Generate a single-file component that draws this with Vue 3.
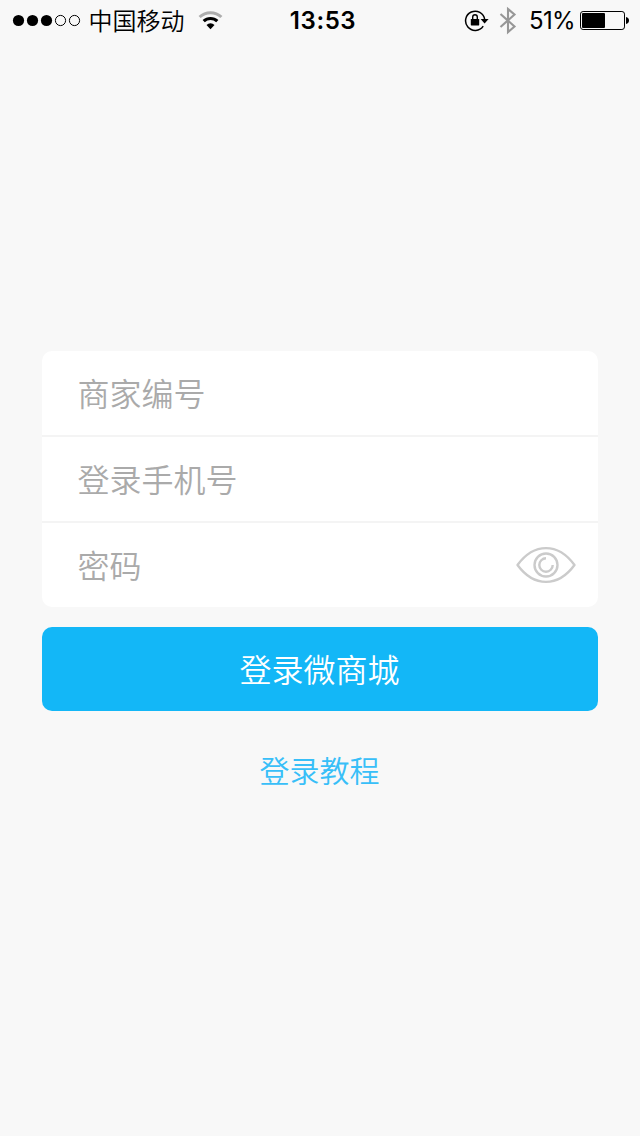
<script setup>
const fields = [
  { id: 'merchant', label: '商家编号' },
  { id: 'phone', label: '登录手机号' },
  { id: 'password', label: '密码', eye: true },
]
const signal = [true, true, true, false, false]
</script>

<template>
  <div class="screen">
    <header class="status">
      <div class="left">
        <svg class="dots" width="70" height="40" viewBox="12 0 70 40">
          <circle
            v-for="(on, i) in signal"
            :key="i"
            :cx="18.5 + i * 14"
            cy="20.5"
            :r="on ? 5.6 : 5.1"
            :fill="on ? '#000' : 'none'"
            :stroke="on ? 'none' : '#000'"
          />
        </svg>
        <span class="carrier">中国移动</span>
        <svg class="wifi" width="26" height="40" viewBox="198 0 26 40" fill="none">
          <path d="M199.600 17a15.800 15.800 0 0 1 21.800 0" stroke="#adadad" stroke-width="3" />
          <path d="M203.700 21.200a9.900 9.900 0 0 1 13.600 0" stroke="#000" stroke-width="3.200" />
          <path d="M206.500 24.900a6 6 0 0 1 8 0L210.500 29.200z" fill="#000" />
        </svg>
      </div>
      <span class="time">13:53</span>
      <div class="right">
        <svg width="26" height="40" viewBox="464 0 26 40" fill="none">
          <path d="M483.200 26.100a9.600 9.600 0 1 1 1.500-6.600" stroke="#000" stroke-width="1.5" />
          <path d="M480.600 19h8l-4 4.600z" fill="#000" />
          <rect x="470.800" y="19" width="8.400" height="6.400" rx=".6" fill="#000" />
          <path d="M472.700 19.500v-2.400a2.300 2.300 0 0 1 4.600 0v2.400" stroke="#000" stroke-width="1.4" />
        </svg>
        <svg class="bluetooth" width="20" height="40" viewBox="498 0 20 40" fill="none">
          <path d="M500.500 14l14 12.500-6.500 5.700V9l6.500 5.500-14 12.500" stroke="#979797" stroke-width="2.1" />
        </svg>
        <span class="percent">51%</span>
        <svg class="battery" width="50" height="40" viewBox="580 0 50 40">
          <rect x="580.500" y="11.500" width="44" height="18" rx="2.600" fill="none" stroke="#000" />
          <rect x="582" y="13" width="23" height="15" rx="1" fill="#000" />
          <path d="M626 17c4 .5 4 6.500 0 7z" fill="#000" />
        </svg>
      </div>
    </header>

    <main class="login">
      <div class="card">
        <div v-for="f in fields" :key="f.id" class="field">
          <span>{{ f.label }}</span>
          <svg v-if="f.eye" width="62" height="40" viewBox="515 545 62 40" fill="none" stroke="#cbcbcb" stroke-width="2.4">
            <path d="M517.500 565C534 542.500 558 542.500 574.500 565C558 587.500 534 587.500 517.500 565z" stroke-linejoin="round" />
            <circle cx="546" cy="565" r="11.500" />
            <path d="M546 558.300a6.700 6.700 0 1 0 6.700 6.700" />
          </svg>
        </div>
      </div>
      <button class="submit" type="button">登录微商城</button>
      <a class="guide">登录教程</a>
    </main>
  </div>
</template>

<style>
body {
  background: #f8f8f8;
}
</style>

<style scoped>
.screen {
  width: 640px;
  height: 1136px;
  overflow: hidden;
  background: #f8f8f8;
  font-family: "Noto Sans CJK SC DemiLight", "Noto Sans CJK SC", sans-serif;
  font-weight: 350;
}
.status {
  display: grid;
  grid-template-columns: 1fr auto 1fr;
  grid-template-rows: 40px;
  align-items: center;
  height: 40px;
  padding: 0 10px 0 12px;
  color: #000;
}
.status svg {
  display: block;
  flex: none;
}
.left,
.right {
  display: flex;
  align-items: center;
  height: 40px;
}
.right {
  justify-content: flex-end;
}
.carrier {
  margin-left: 6.5px;
  font-size: 24px;
  line-height: 40px;
}
.wifi {
  margin-left: 13.5px;
}
.time {
  font: 600 24px/40px Inter, sans-serif;
  letter-spacing: 0.6px;
  padding: 2px 0 0 4px;
}
.bluetooth {
  margin-left: 8px;
}
.percent {
  width: 45px;
  margin: 0 6px 0 11px;
  font: 400 24px/40px Inter, sans-serif;
  letter-spacing: -0.7px;
  white-space: nowrap;
  padding-top: 1px;
}
.login {
  display: flex;
  flex-direction: column;
  align-items: center;
  padding: 311px 42px 0;
}
.card {
  width: 100%;
  border-radius: 10px;
  background: #fff;
  overflow: hidden;
}
.field {
  display: flex;
  align-items: center;
  justify-content: space-between;
  height: 84px;
  padding: 0 21px 0 35.500px;
  font-size: 32px;
  color: #aaa;
}
.field span {
  padding-bottom: 2px;
}
.field + .field {
  border-top: 2px solid #f4f4f4;
}
.submit {
  width: 100%;
  height: 84px;
  margin-top: 20px;
  padding: 0 1px 2px 0;
  border: 0;
  border-radius: 10px;
  background: #13b7f7;
  color: #fff;
  font: inherit;
  font-size: 32px;
}
.guide {
  margin-top: 36px;
  padding-right: 1px;
  font-size: 30px;
  line-height: 44px;
  color: #38bff8;
}
</style>
